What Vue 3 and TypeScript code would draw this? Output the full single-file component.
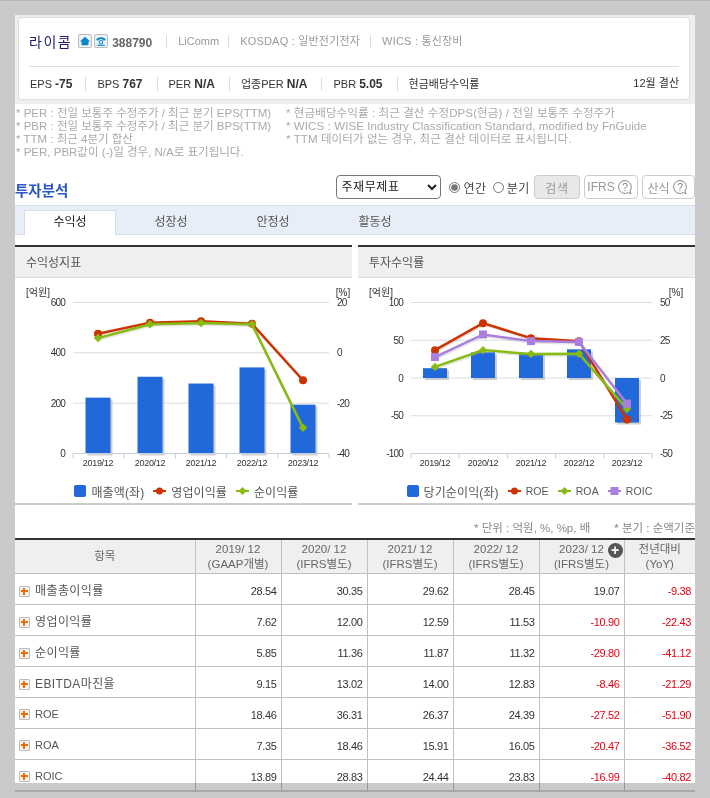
<script setup lang="ts">
const years = ['2019/12', '2020/12', '2021/12', '2022/12', '2023/12']

const metrics = [
  {label: 'EPS', value: '-75'},
  {label: 'BPS', value: '767'},
  {label: 'PER', value: 'N/A'},
  {label: '업종PER', value: 'N/A'},
  {label: 'PBR', value: '5.05'},
  {label: '현금배당수익률', value: ''},
]

const notesLeft = [
  '* PER : 전일 보통주 수정주가 / 최근 분기 EPS(TTM)',
  '* PBR : 전일 보통주 수정주가 / 최근 분기 BPS(TTM)',
  '* TTM : 최근 4분기 합산',
  '* PER, PBR값이 (-)일 경우, N/A로 표기됩니다.',
]
const notesRight = [
  '* 현금배당수익률 : 최근 결산 수정DPS(현금) / 전일 보통주 수정주가',
  '* WICS : WISE Industry Classification Standard, modified by FnGuide',
  '* TTM 데이터가 없는 경우, 최근 결산 데이터로 표시됩니다.',
]

const tabs = ['수익성', '성장성', '안정성', '활동성']

const rows = [
  {name: '매출총이익률', vals: [28.54, 30.35, 29.62, 28.45, 19.07, -9.38]},
  {name: '영업이익률', vals: [7.62, 12.0, 12.59, 11.53, -10.9, -22.43]},
  {name: '순이익률', vals: [5.85, 11.36, 11.87, 11.32, -29.8, -41.12]},
  {name: 'EBITDA마진율', vals: [9.15, 13.02, 14.0, 12.83, -8.46, -21.29]},
  {name: 'ROE', vals: [18.46, 36.31, 26.37, 24.39, -27.52, -51.9]},
  {name: 'ROA', vals: [7.35, 18.46, 15.91, 16.05, -20.47, -36.52]},
  {name: 'ROIC', vals: [13.89, 28.83, 24.44, 23.83, -16.99, -40.82]},
]

const heads = [
  ['2019/ 12', '(GAAP개별)'],
  ['2020/ 12', '(IFRS별도)'],
  ['2021/ 12', '(IFRS별도)'],
  ['2022/ 12', '(IFRS별도)'],
  ['2023/ 12', '(IFRS별도)'],
  ['전년대비', '(YoY)'],
]

const RED = '#cc3300'
const GREEN = '#88bb11'
const PURPLE = '#aa7fdd'

interface Chart {
  left: number
  right: number
  cx: number[]
  barW: number
  bars: number[]
  barMin: number
  barMax: number
  lineMin: number
  lineMax: number
  leftTicks: number[]
  rightTicks: number[]
  leftX: number
  rightX: number
  pctX: number
  lines: {color: string; kind: string; vals: number[]}[]
}

// y positions inside the svg
const TOP = 24.5
const BOTTOM = 175.5

const charts: Chart[] = [
  {
    left: 58, right: 314, cx: [83, 135, 186, 237, 288], barW: 25,
    bars: [222, 305, 278, 342, 194], barMin: 0, barMax: 600,
    lineMin: -40, lineMax: 20,
    leftTicks: [600, 400, 200, 0], rightTicks: [20, 0, -20, -40],
    leftX: 50, rightX: 322, pctX: 328,
    lines: [
      {color: RED, kind: 'circle', vals: [7.62, 12.0, 12.59, 11.53, -10.9]},
      {color: GREEN, kind: 'diamond', vals: [5.85, 11.36, 11.87, 11.32, -29.8]},
    ],
  },
  {
    left: 53, right: 294, cx: [77, 125, 173, 221, 269], barW: 24,
    bars: [13, 34, 33, 38, -59], barMin: -100, barMax: 100,
    lineMin: -50, lineMax: 50,
    leftTicks: [100, 50, 0, -50, -100], rightTicks: [50, 25, 0, -25, -50],
    leftX: 45, rightX: 302, pctX: 318,
    lines: [
      {color: RED, kind: 'circle', vals: [18.46, 36.31, 26.37, 24.39, -27.52]},
      {color: GREEN, kind: 'diamond', vals: [7.35, 18.46, 15.91, 16.05, -20.47]},
      {color: PURPLE, kind: 'square', vals: [13.89, 28.83, 24.44, 23.83, -16.99]},
    ],
  },
]

function scale(v: number, min: number, max: number) {
  return TOP + ((max - v) / (max - min)) * (BOTTOM - TOP)
}

function barRect(c: Chart, v: number) {
  const zero = scale(Math.max(c.barMin, 0), c.barMin, c.barMax)
  const y = scale(v, c.barMin, c.barMax)
  return {y: Math.min(zero, y), h: Math.abs(zero - y)}
}

function linePoints(c: Chart, vals: number[]) {
  return vals.map((v, i) => `${c.cx[i]},${scale(v, c.lineMin, c.lineMax)}`).join(' ')
}

function tickXs(c: Chart) {
  const out: number[] = []
  for (let i = 0; i <= 5; i++) out.push(c.left + ((c.right - c.left) / 5) * i)
  return out
}

function fmt(v: number) {
  return v.toFixed(2)
}
</script>

<template>
  <div class="page">
    <div class="card-wrap">
      <div class="card">
        <div class="title-row">
          <span class="co-name">라이콤</span>
          <span class="ico-btn">
            <svg width="12" height="12" viewBox="0 0 14 14">
              <path d="M7 2 L13 7.5 H11 V12 H3 V7.5 H1 Z" fill="#0a86c8" />
            </svg>
          </span>
          <span class="ico-btn">
            <svg width="12" height="12" viewBox="0 0 14 14" fill="none" stroke="#0a86c8">
              <path d="M1.5 6 C1.5 1.5 12.5 1.5 12.5 6 L9.5 6.5 L9 5 H5 L4.5 6.5 Z" fill="#0a86c8" stroke="none" />
              <circle cx="7" cy="8.5" r="2" stroke-width="1.2" />
              <path d="M2.5 12 H11.5" stroke-width="1.3" />
            </svg>
          </span>
          <span class="co-code">388790</span>
          <span class="co-info first">LiComm</span>
          <span class="co-info">KOSDAQ : 일반전기전자</span>
          <span class="co-info">WICS : 통신장비</span>
        </div>
        <div class="metric-row">
          <span v-for="m in metrics" :key="m.label" class="metric">
            {{ m.label }} <b v-if="m.value">{{ m.value }}</b>
          </span>
          <span class="settle">12월 결산</span>
        </div>
      </div>
    </div>

    <div class="notes">
      <div class="notes-col left">
        <div v-for="n in notesLeft" :key="n">{{ n }}</div>
      </div>
      <div class="notes-col right">
        <div v-for="n in notesRight" :key="n">{{ n }}</div>
      </div>
    </div>

    <div class="search-bar">
      <h2>투자분석</h2>
      <div class="controls">
        <select class="sel">
          <option>주재무제표</option>
        </select>
        <label class="radio"><input type="radio" name="period" checked>연간</label>
        <label class="radio"><input type="radio" name="period">분기</label>
        <span class="btn search">검색</span>
        <span class="btn">IFRS
          <svg width="20" height="20" viewBox="0 0 20 20" fill="none" stroke="#888">
            <path d="M10 3.5 a6.5 6.5 0 1 0 3.5 12 L16 17 L15 14 A6.5 6.5 0 0 0 10 3.5 Z" />
            <text x="10" y="14" text-anchor="middle" class="q">?</text>
          </svg>
        </span>
        <span class="btn">산식
          <svg width="20" height="20" viewBox="0 0 20 20" fill="none" stroke="#888">
            <path d="M10 3.5 a6.5 6.5 0 1 0 3.5 12 L16 17 L15 14 A6.5 6.5 0 0 0 10 3.5 Z" />
            <text x="10" y="14" text-anchor="middle" class="q">?</text>
          </svg>
        </span>
      </div>
    </div>

    <div class="tabs">
      <span v-for="(t, i) in tabs" :key="t" class="tab" :class="{on: i === 0}">{{ t }}</span>
    </div>

    <div class="panels">
      <div v-for="(c, ci) in charts" :key="ci" class="panel">
        <div class="panel-head">{{ ci === 0 ? '수익성지표' : '투자수익률' }}</div>
        <svg class="chart" width="337" height="201" viewBox="0 0 337 201">
          <text x="11" y="18" class="lbl">[억원]</text>
          <text :x="c.pctX" y="18" class="lbl" text-anchor="middle">[%]</text>
          <line v-for="t in c.leftTicks.slice(0, -1)" :key="t" :x1="c.left" :x2="c.right"
                :y1="scale(t, c.barMin, c.barMax)" :y2="scale(t, c.barMin, c.barMax)" stroke="#dcdcdc" />
          <text v-for="t in c.leftTicks" :key="t" :x="c.leftX" :y="scale(t, c.barMin, c.barMax) + 3.5"
                class="lbl tick" text-anchor="end">{{ t }}</text>
          <text v-for="t in c.rightTicks" :key="t" :x="c.rightX" :y="scale(t, c.lineMin, c.lineMax) + 3.5"
                class="lbl tick">{{ t }}</text>
          <g v-for="(b, i) in c.bars" :key="i">
            <rect :x="c.cx[i] - c.barW / 2 + 2" :y="barRect(c, b).y + 2" :width="c.barW" :height="barRect(c, b).h"
                  fill="#bbb" opacity="0.7" />
            <rect :x="c.cx[i] - c.barW / 2" :y="barRect(c, b).y" :width="c.barW" :height="barRect(c, b).h"
                  fill="#2169db" />
          </g>
          <path :d="`M${c.left} ${BOTTOM} H${c.right}`" stroke="#c5d0de" />
          <path v-for="x in tickXs(c)" :key="x" :d="`M${x} ${BOTTOM} V${BOTTOM + 5}`" stroke="#c5d0de" />
          <text v-for="(y, i) in years" :key="y" :x="c.cx[i]" y="188" class="yr" text-anchor="middle">{{ y }}</text>
          <g v-for="l in c.lines" :key="l.color">
            <polyline :points="linePoints(c, l.vals)" fill="none" stroke="#999" stroke-width="2.5"
                      opacity="0.25" transform="translate(1 1.5)" />
            <polyline :points="linePoints(c, l.vals)" fill="none" :stroke="l.color" stroke-width="2.5" />
            <template v-for="(v, i) in l.vals" :key="i">
              <circle v-if="l.kind === 'circle'" :cx="c.cx[i]" :cy="scale(v, c.lineMin, c.lineMax)" r="4" :fill="l.color" />
              <rect v-else-if="l.kind === 'diamond'" :x="c.cx[i] - 3" :y="scale(v, c.lineMin, c.lineMax) - 3" width="6" height="6"
                    :fill="l.color" :transform="`rotate(45 ${c.cx[i]} ${scale(v, c.lineMin, c.lineMax)})`" />
              <rect v-else :x="c.cx[i] - 4" :y="scale(v, c.lineMin, c.lineMax) - 4" width="8" height="8" :fill="l.color" />
            </template>
          </g>
        </svg>
        <div class="legend">
          <template v-if="ci === 0">
            <span class="lg"><i class="swatch"></i>매출액(좌)</span>
            <span class="lg">
              <svg width="13" height="12" viewBox="0 0 13 12"><path d="M0 6 H13" stroke="#cc3300" stroke-width="2" /><circle cx="6.5" cy="6" r="3.5" fill="#cc3300" /></svg>영업이익률</span>
            <span class="lg">
              <svg width="13" height="12" viewBox="0 0 13 12"><path d="M0 6 H13" stroke="#88bb11" stroke-width="2" /><path d="M6.5 2 L10.5 6 L6.5 10 L2.5 6 Z" fill="#88bb11" /></svg>순이익률</span>
          </template>
          <template v-else>
            <span class="lg"><i class="swatch"></i>당기순이익(좌)</span>
            <span class="lg latin">
              <svg width="13" height="12" viewBox="0 0 13 12"><path d="M0 6 H13" stroke="#cc3300" stroke-width="2" /><circle cx="6.5" cy="6" r="3.5" fill="#cc3300" /></svg>ROE</span>
            <span class="lg latin">
              <svg width="13" height="12" viewBox="0 0 13 12"><path d="M0 6 H13" stroke="#88bb11" stroke-width="2" /><path d="M6.5 2 L10.5 6 L6.5 10 L2.5 6 Z" fill="#88bb11" /></svg>ROA</span>
            <span class="lg latin">
              <svg width="13" height="12" viewBox="0 0 13 12"><path d="M0 6 H13" stroke="#aa7fdd" stroke-width="2" /><rect x="2.5" y="2" width="8" height="8" fill="#aa7fdd" /></svg>ROIC</span>
          </template>
        </div>
      </div>
    </div>

    <div class="unit-row">
      <span>* 단위 : 억원, %, %p, 배</span>
      <span>* 분기 : 순액기준</span>
    </div>

    <table class="tbl">
      <colgroup>
        <col class="c-name">
        <col class="c-val">
        <col class="c-val">
        <col class="c-val">
        <col class="c-val">
        <col class="c-last">
        <col class="c-yoy">
      </colgroup>
      <thead>
        <tr>
          <th>항목</th>
          <th v-for="(h, i) in heads" :key="i" class="hd">
            {{ h[0] }}<br>{{ h[1] }}
            <span v-if="i === 4" class="more">+</span>
          </th>
        </tr>
      </thead>
      <tbody>
        <tr v-for="r in rows" :key="r.name">
          <td class="name" :class="{short: r.name.length <= 4 && r.name.startsWith('RO')}">
            <span class="plus"><i></i></span>{{ r.name }}
          </td>
          <td v-for="(v, i) in r.vals" :key="i" class="num" :class="{neg: v < 0}">{{ fmt(v) }}</td>
        </tr>
      </tbody>
    </table>

    <div class="fade"></div>
  </div>
</template>

<style>
html {
  background: #cacaca;
}

body {
  box-sizing: border-box;
  height: 798px;
  margin: 0;
  padding-top: 15px;
  overflow: hidden;
  background: linear-gradient(#b5b5b5 1px, #cacaca 1px);
}
</style>

<style scoped>
.page {
  position: relative;
  box-sizing: border-box;
  width: 680px;
  height: 777px;
  margin-left: 15px;
  background: #fff;
  overflow: hidden;
  border-bottom: 2px solid #a8a8a8;
  font-family: "Liberation Sans", "Noto Sans CJK KR", sans-serif;
  font-size: 11px;
  color: #333;
}

.card-wrap {
  box-sizing: border-box;
  height: 89px;
  background: #eee;
  padding: 2px 5px 4px 3px;
}

.card {
  box-sizing: border-box;
  height: 83px;
  background: #fff;
  border: 1px solid #ddd;
  border-radius: 4px;
  padding: 0 10px;
}

.title-row {
  display: flex;
  align-items: center;
  height: 46px;
  padding-bottom: 2px;
  border-bottom: 1px solid #ddd;
}

.co-name {
  font-size: 14px;
  letter-spacing: 1.5px;
  color: #1a1a6e;
  margin-right: 6px;
}

.ico-btn {
  box-sizing: border-box;
  display: flex;
  align-items: center;
  justify-content: center;
  width: 14px;
  height: 14px;
  margin-right: 2px;
  border: 1px solid #bbb;
  border-radius: 2px;
  background: #eef3f7;
}

.co-code {
  font-size: 12px;
  font-weight: bold;
  color: #666;
  margin: 3px 0 0 2px;
}

.co-info {
  color: #999;
  padding: 0 10px 0 11px;
  border-left: 1px solid #ddd;
  font-size: 11px;
  line-height: 13px;
  letter-spacing: 0.2px;
}

.co-info.first {
  margin-left: 14px;
  padding-right: 9px;
  letter-spacing: 0;
}

.metric-row {
  display: flex;
  align-items: center;
  height: 33px;
  padding-left: 1px;
}

.metric {
  padding: 0 14px 0 11px;
  border-left: 1px solid #ddd;
  line-height: 14px;
  white-space: nowrap;
}

.metric:first-child {
  border-left: none;
  padding-left: 0;
  padding-right: 13px;
}

.metric b {
  color: #333;
  font-size: 12px;
}

.settle {
  margin-left: auto;
  line-height: 14px;
  margin-top: -2px;
}

.notes {
  display: flex;
  box-sizing: border-box;
  height: 65px;
  padding: 3px 0 0 1px;
  color: #aaa;
  font-size: 11.5px;
  line-height: 13px;
  white-space: nowrap;
}

.notes-col.left {
  width: 270px;
}

.notes-col.right {
  letter-spacing: 0.1px;
}

.search-bar {
  display: flex;
  align-items: center;
  justify-content: space-between;
  height: 24px;
  margin-top: 6px;
}

h2 {
  margin: 4px 0 0;
  font-size: 14.5px;
  font-weight: bold;
  color: #2a56c6;
}

.controls {
  display: flex;
  align-items: center;
  font-size: 12px;
  color: #444;
}

.sel {
  width: 105px;
  height: 24px;
  margin-right: 8px;
  padding-left: 0;
  border: 1px solid #777;
  border-radius: 4px;
  background: #fff;
  font-family: inherit;
  font-size: 12px;
  letter-spacing: 0.6px;
  color: #222;
}

.radio {
  display: flex;
  align-items: center;
  letter-spacing: 0.6px;
  margin-right: 5px;
}

.radio + .radio {
  margin-left: 1px;
  margin-right: 4px;
}

.radio input {
  margin: 0 3px 0 0;
  width: 11px;
  height: 11px;
  accent-color: #777;
}

.btn {
  box-sizing: border-box;
  display: flex;
  align-items: center;
  justify-content: center;
  width: 53px;
  height: 24px;
  margin-left: 4px;
  border: 1px solid #ccc;
  border-radius: 4px;
  color: #999;
  white-space: nowrap;
}

.btn.search {
  width: 46px;
  margin-left: 0;
  background: #e8e8e8;
  letter-spacing: 0.8px;
}

.btn.search + .btn {
  width: 54px;
}

.q {
  font-size: 11px;
  fill: #888;
  stroke: none;
}

.tabs {
  display: flex;
  box-sizing: border-box;
  height: 30px;
  margin-top: 6px;
  padding-left: 9px;
  background: #e7eef8;
  border-top: 1px solid #d5dcea;
  border-bottom: 1px solid #d5dcea;
}

.tab {
  box-sizing: border-box;
  width: 102px;
  text-align: center;
  line-height: 32px;
  font-size: 12px;
  color: #555;
}

.tab.on {
  width: 92px;
  height: 25px;
  margin-top: 4px;
  margin-right: 4px;
  background: #fff;
  border: 1px solid #d5dcea;
  border-bottom: none;
  line-height: 22px;
  color: #222;
}

.panels {
  display: flex;
  justify-content: space-between;
  margin-top: 10px;
}

.panel {
  box-sizing: border-box;
  width: 337px;
  height: 260px;
  border-top: 2px solid #333;
  border-bottom: 2px solid #ccc;
}

.panel-head {
  box-sizing: border-box;
  height: 31px;
  padding: 2px 0 0 11px;
  line-height: 29px;
  font-size: 12px;
  color: #555;
  background: #efefef;
  border-bottom: 1px solid #ddd;
}

.chart {
  display: block;
}

.lbl {
  font-size: 10px;
  fill: #333;
}

.tick {
  font-size: 10px;
  letter-spacing: -0.8px;
}

.yr {
  font-size: 9px;
  letter-spacing: -0.3px;
  fill: #333;
}

.legend {
  display: flex;
  justify-content: center;
  align-items: center;
  gap: 9px;
  height: 24px;
  padding-left: 6px;
  font-size: 12px;
  letter-spacing: 0.1px;
  color: #555;
}

.lg {
  display: flex;
  align-items: center;
  gap: 5px;
}

.lg.latin {
  font-size: 10.5px;
}

.swatch {
  display: block;
  width: 12px;
  height: 12px;
  border-radius: 2px;
  background: #2169db;
}

.unit-row {
  display: flex;
  justify-content: flex-end;
  gap: 24px;
  box-sizing: border-box;
  height: 33px;
  padding-top: 14px;
  color: #888;
  font-size: 11.5px;
  white-space: nowrap;
}

.tbl {
  width: 680px;
  table-layout: fixed;
  border-collapse: collapse;
  border-top: 2px solid #333;
}

.c-name {
  width: 180px;
}

.c-val {
  width: 86px;
}

.c-last {
  width: 85px;
}

.c-yoy {
  width: 71px;
}

.tbl th {
  position: relative;
  height: 33px;
  padding: 0;
  background: #efefef;
  font-weight: normal;
  font-size: 11.5px;
  line-height: 15px;
  color: #666;
  border: 1px solid #c0c0c0;
  border-top: none;
}

.tbl th:first-child,
.tbl td:first-child {
  border-left: none;
}

.tbl th:last-child,
.tbl td:last-child {
  border-right: none;
}

.tbl td {
  height: 26px;
  padding: 4px 0 0;
  border: 1px solid #c0c0c0;
}

.tbl td.name {
  padding: 1px 0 0 4px;
  font-size: 12px;
  letter-spacing: 0.4px;
  color: #555;
  white-space: nowrap;
}

.tbl td.name.short {
  font-size: 11px;
  letter-spacing: 0;
}

.plus {
  display: inline-block;
  position: relative;
  width: 9px;
  height: 9px;
  margin-right: 5px;
  vertical-align: -2px;
  border: 1px solid #bbb;
  border-radius: 1px;
  background: #f4f4f4;
}

.plus::before,
.plus i {
  content: "";
  position: absolute;
  display: block;
  background: #f26a00;
}

.plus::before {
  left: 1px;
  top: 3px;
  width: 7px;
  height: 2px;
}

.plus i {
  left: 3px;
  top: 1px;
  width: 2px;
  height: 7px;
}

.tbl td.num {
  padding-right: 4px;
  text-align: right;
  font-size: 11px;
  letter-spacing: -0.35px;
  color: #333;
}

.tbl td.num.neg {
  color: #e60012;
}

.more {
  position: absolute;
  right: 1px;
  top: 3px;
  width: 15px;
  height: 15px;
  border-radius: 50%;
  background: #555;
  color: #fff;
  font-weight: bold;
  font-size: 14px;
  line-height: 14px;
  text-align: center;
}

.fade {
  position: absolute;
  left: 0;
  right: 0;
  bottom: 0;
  height: 7px;
  background: #cacaca;
  mix-blend-mode: multiply;
}
</style>
